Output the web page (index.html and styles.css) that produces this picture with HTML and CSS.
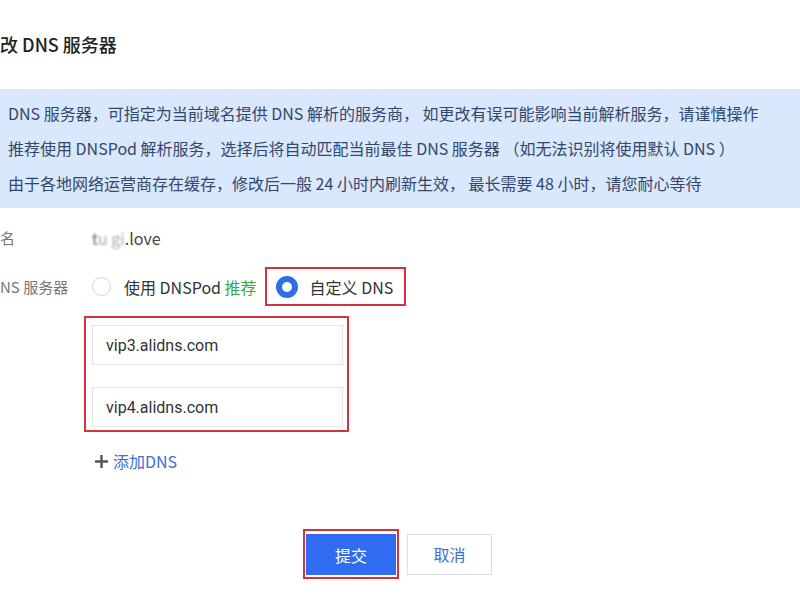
FILE: index.html
```html
<!DOCTYPE html>
<html lang="zh-CN">
<head>
    <meta charset="UTF-8">
    <title>修改 DNS 服务器</title>
    <link rel="stylesheet" href="styles.css">
</head>
<body>
    <div class="dialog">
        <h2 class="dialog-title">改 DNS 服务器</h2>

        <div class="notice">
            <p>DNS 服务器，可指定为当前域名提供 DNS 解析的服务商， 如更改有误可能影响当前解析服务，请谨慎操作</p>
            <p>推荐使用 DNSPod 解析服务，选择后将自动匹配当前最佳 DNS 服务器 （如无法识别将使用默认 DNS ）</p>
            <p>由于各地网络运营商存在缓存，修改后一般 24 小时内刷新生效， 最长需要 48 小时，请您耐心等待</p>
        </div>

        <div class="form">
            <div class="form-row row-domain">
                <span class="form-label">名</span>
                <span class="form-value"><span class="blur-dark">t</span><span class="blur">u&nbsp;gi</span>.love</span>
            </div>

            <div class="form-row row-dns">
                <span class="form-label">NS 服务器</span>
                <div class="radio-group">
                    <label class="radio">
                        <span class="radio-dot"></span>
                        <span>使用 DNSPod <em class="tag-green">推荐</em></span>
                    </label>
                    <label class="radio radio-checked mark">
                        <span class="radio-dot"></span>
                        <span>自定义 DNS</span>
                    </label>
                </div>
            </div>

            <div class="form-row row-inputs">
                <span class="form-label"></span>
                <div class="input-list mark">
                    <input class="text-input" type="text" value="vip3.alidns.com">
                    <input class="text-input" type="text" value="vip4.alidns.com">
                </div>
            </div>

            <div class="form-row row-add">
                <span class="form-label"></span>
                <a class="add-link">
                    <svg class="plus" width="13" height="13" viewBox="0 0 13 13"><path d="M6.5 0v13M0 6.5h13" stroke="#555" stroke-width="2.4"/></svg>添加DNS
                </a>
            </div>
        </div>

        <div class="actions">
            <span class="mark btn-wrap"><button class="btn btn-primary">提交</button></span>
            <button class="btn btn-default">取消</button>
        </div>
    </div>
</body>
</html>
```

FILE: styles.css
```css
body{
    margin: 0;
    background: #fff;
    font-family: "Noto Sans CJK SC", "Noto Sans", sans-serif;
    color: #333;
    overflow: hidden;
}
p{
    margin: 0;
}
.dialog{
    width: 800px;
}
.dialog-title{
    margin: 0 0 33px;
    padding-top: 32px;
    font-size: 18px;
    line-height: 24px;
    font-weight: 500;
    color: #222;
}
.notice{
    background: #dae8fd;
    padding: 7px 8px;
    font-size: 16px;
    line-height: 35px;
    color: #33476c;
    white-space: nowrap;
}
.form{
    padding-top: 5px;
}
.form-row{
    display: flex;
    align-items: center;
}
.form-label{
    width: 92px;
    flex: none;
    font-size: 15px;
    color: #777;
}
.row-domain{
    height: 49px;
}
.form-value{
    font-size: 16px;
    color: #444;
}
.blur-dark{
    color: #666;
    filter: blur(0.8px);
}
.blur{
    color: #aaa;
    filter: blur(1.2px);
}
.row-dns{
    height: 49px;
}
.radio-group{
    display: flex;
    align-items: center;
}
.radio{
    display: flex;
    align-items: center;
    font-size: 16px;
    color: #333;
}
.radio-dot{
    width: 19px;
    height: 19px;
    box-sizing: border-box;
    border: 1px solid #d6d6d6;
    border-radius: 50%;
    margin-right: 13px;
}
.tag-green{
    font-style: normal;
    color: #3aa847;
}
.mark{
    border: 2px solid #d2343b;
}
.radio-checked{
    margin-left: 8px;
    height: 35px;
    padding: 0 11px 0 9px;
}
.radio-checked .radio-dot{
    width: 22px;
    height: 22px;
    border: 6px solid #2d6de6;
    margin-right: 12px;
}
.row-inputs{
    margin-top: 5px;
}
.input-list{
    margin-left: -8px;
    padding: 7px 4px 3px 6px;
    display: flex;
    flex-direction: column;
    gap: 22px;
}
.text-input{
    width: 251px;
    height: 40px;
    box-sizing: border-box;
    border: 1px solid #e4e4e4;
    padding: 0 13px;
    font-family: "Roboto", "Noto Sans", sans-serif;
    font-size: 16px;
    color: #333;
    outline: none;
}
.row-add{
    margin-top: 19px;
    height: 20px;
}
.add-link{
    display: flex;
    align-items: center;
    font-size: 16px;
    color: #3b6fd6;
    margin-left: 3px;
}
.add-link .plus{
    margin-right: 5px;
}
.actions{
    display: flex;
    align-items: center;
    margin: 58px 0 0 303px;
    gap: 8px;
}
.btn-wrap{
    display: flex;
    padding: 3px 1px 2px;
}
.btn{
    height: 41px;
    font-family: "Noto Sans CJK SC", sans-serif;
    font-size: 16px;
    border: 1px solid transparent;
    cursor: pointer;
}
.btn-primary{
    width: 90px;
    background: #2f6cf2;
    color: #fff;
}
.btn-default{
    width: 85px;
    background: #fff;
    border-color: #dedede;
    color: #3b6fd6;
}
```
